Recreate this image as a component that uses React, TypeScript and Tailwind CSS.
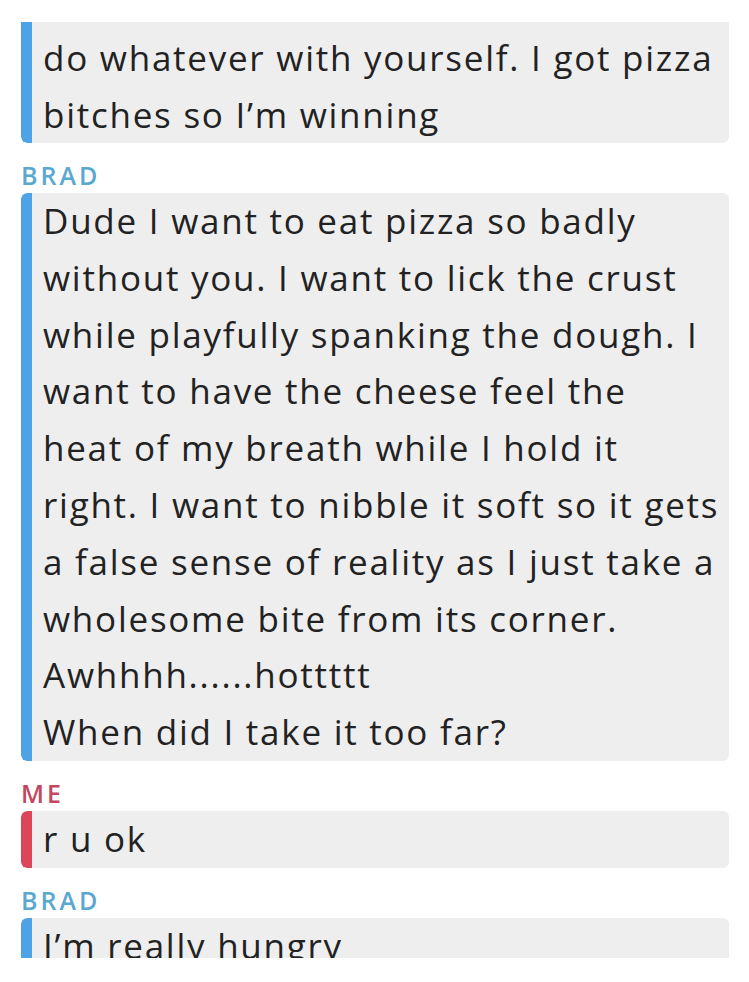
const font = { fontFamily: "'Open Sans', Lato, sans-serif" };

function Label({ name, color }: { name: string; color: string }) {
  return (
    <div className={`h-[50px] flex items-end pb-[4px] text-[25px] leading-[28px] font-semibold tracking-[3px] ${color}`}>
      {name}
    </div>
  );
}

function Bubble({ bar, lines }: { bar: string; lines: string[] }) {
  return (
    <div className="flex rounded-[6px] overflow-hidden bg-[#eeeeef]">
      <div className={`w-[11px] shrink-0 rounded-l-[6px] ${bar}`} />
      <div className="pl-[11px] text-[35px] leading-[56.8px] tracking-[1.75px] text-[#222222]">
        {lines.map((l, i) => (
          <div key={i} className="whitespace-nowrap">{l}</div>
        ))}
      </div>
    </div>
  );
}

export default function App() {
  return (
    <div className="w-[749px] h-[982px] bg-white" style={font}>
      <div className="ml-[21px] mr-[20px] pt-[22px] h-[958px] overflow-hidden">
        {/* earlier message, scrolled partly out of view */}
        <div className="h-[121px] overflow-hidden rounded-b-[6px]">
          <div className="-mt-[49px]">
            <Bubble
              bar="bg-[#4da3e6]"
              lines={[
                "I don't need to share it with you, you can",
                "do whatever with yourself. I got pizza",
                "bitches so I’m winning",
              ]}
            />
          </div>
        </div>

        <Label name="BRAD" color="text-[#5aa8cf]" />
        <Bubble
          bar="bg-[#4da3e6]"
          lines={[
            "Dude I want to eat pizza so badly",
            "without you. I want to lick the crust",
            "while playfully spanking the dough. I",
            "want to have the cheese feel the",
            "heat of my breath while I hold it",
            "right. I want to nibble it soft so it gets",
            "a false sense of reality as I just take a",
            "wholesome bite from its corner.",
            "Awhhhh......hottttt",
            "When did I take it too far?",
          ]}
        />

        <Label name="ME" color="text-[#c4475f]" />
        <Bubble bar="bg-[#dc4659]" lines={["r u ok"]} />

        <Label name="BRAD" color="text-[#5aa8cf]" />
        <Bubble bar="bg-[#4da3e6]" lines={["I’m really hungry"]} />
      </div>
    </div>
  );
}
